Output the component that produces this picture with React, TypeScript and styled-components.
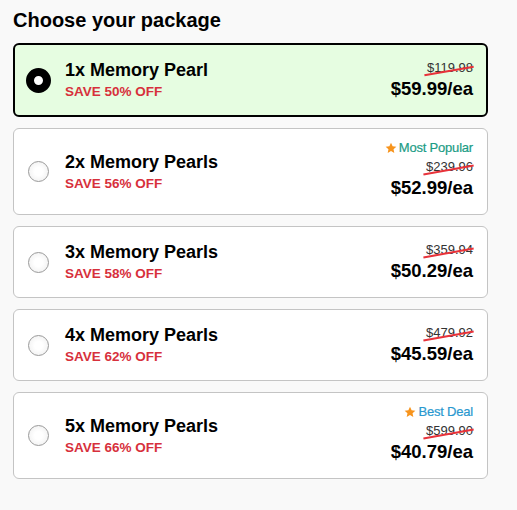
import React, { useState } from 'react';
import styled, { createGlobalStyle } from 'styled-components';

const GlobalStyle = createGlobalStyle`
  html, body {
    margin: 0;
    background: #f9f9f9;
  }
  body {
    font-family: "Liberation Sans", Arial, sans-serif;
    color: #000;
  }
`;

const Page = styled.div`
  padding: 8px 13px;
  width: 475px;
  display: flex;
  flex-direction: column;
  gap: 11px;
`;

const Heading = styled.h2`
  margin: 0;
  font-size: 20px;
  line-height: 24px;
  font-weight: 700;
`;

const Card = styled.label<{ $selected: boolean }>`
  display: flex;
  align-items: center;
  gap: 14px;
  cursor: pointer;
  border-radius: 6px;
  background: ${p => (p.$selected ? '#e6fde1' : '#ffffff')};
  border: ${p => (p.$selected ? '2px solid #000' : '1px solid #c4c4c4')};
  padding: ${p => (p.$selected ? '14px 13px 14px 11px' : '14px 14px 14px 12px')};
`;

const RadioBox = styled.span`
  width: 25px;
  height: 25px;
  display: flex;
  align-items: center;
  justify-content: center;
  flex-shrink: 0;
`;

const Radio = styled.span<{ $checked: boolean }>`
  box-sizing: border-box;
  border-radius: 50%;
  width: ${p => (p.$checked ? 25 : 21)}px;
  height: ${p => (p.$checked ? 25 : 21)}px;
  border: ${p => (p.$checked ? '8.5px solid #000' : '1px solid #9a9a9a')};
  background: ${p => (p.$checked ? '#fff' : 'radial-gradient(circle, #ffffff 30%, #ececec 100%)')};
`;

const Info = styled.div`
  flex: 1;
  display: flex;
  flex-direction: column;
  gap: 2px;
`;

const Name = styled.div`
  font-size: 18px;
  line-height: 22px;
  font-weight: 700;
`;

const Save = styled.div`
  font-size: 13.5px;
  line-height: 18px;
  font-weight: 700;
  color: #d7303c;
`;

const Prices = styled.div`
  display: flex;
  flex-direction: column;
  align-items: flex-end;
`;

const Badge = styled.div<{ $color: string }>`
  display: flex;
  align-items: center;
  gap: 2px;
  margin-top: -3px;
  margin-bottom: 3px;
  font-size: 13px;
  line-height: 15px;
  letter-spacing: -0.2px;
  -webkit-text-stroke: 0.2px ${p => p.$color};
  color: ${p => p.$color};
`;

const OldPrice = styled.span`
  position: relative;
  font-size: 13px;
  line-height: 18px;
  color: #333;

  &::after {
    content: '';
    position: absolute;
    left: -3px;
    right: -1px;
    top: 60%;
    height: 1.5px;
    background: #e8323a;
    transform: rotate(-10deg);
  }
`;

const Price = styled.div`
  font-size: 18.5px;
  line-height: 24px;
  font-weight: 700;
`;

const Star = () => (
  <svg width="12" height="12" viewBox="0 0 24 24">
    <path
      fill="#f7941d"
      d="M12 1.5l3.2 6.9 7.5.9-5.6 5.1 1.5 7.4L12 18l-6.6 3.8 1.5-7.4L1.3 9.3l7.5-.9z"
    />
  </svg>
);

interface Pack {
  name: string;
  save: string;
  old: string;
  price: string;
  badge?: { text: string; color: string };
}

const packs: Pack[] = [
  { name: '1x Memory Pearl', save: 'SAVE 50% OFF', old: '$119.98', price: '$59.99/ea' },
  {
    name: '2x Memory Pearls',
    save: 'SAVE 56% OFF',
    old: '$239.96',
    price: '$52.99/ea',
    badge: { text: 'Most Popular', color: '#1b9c85' },
  },
  { name: '3x Memory Pearls', save: 'SAVE 58% OFF', old: '$359.94', price: '$50.29/ea' },
  { name: '4x Memory Pearls', save: 'SAVE 62% OFF', old: '$479.92', price: '$45.59/ea' },
  {
    name: '5x Memory Pearls',
    save: 'SAVE 66% OFF',
    old: '$599.90',
    price: '$40.79/ea',
    badge: { text: 'Best Deal', color: '#2a98cf' },
  },
];

export default function App() {
  const [selected, setSelected] = useState(0);

  return (
    <>
      <GlobalStyle />
      <Page>
        <Heading>Choose your package</Heading>
        {packs.map((p, i) => (
          <Card key={p.name} $selected={selected === i} onClick={() => setSelected(i)}>
            <RadioBox>
              <Radio $checked={selected === i} />
            </RadioBox>
            <Info>
              <Name>{p.name}</Name>
              <Save>{p.save}</Save>
            </Info>
            <Prices>
              {p.badge && (
                <Badge $color={p.badge.color}>
                  <Star />
                  {p.badge.text}
                </Badge>
              )}
              <OldPrice>{p.old}</OldPrice>
              <Price>{p.price}</Price>
            </Prices>
          </Card>
        ))}
      </Page>
    </>
  );
}
